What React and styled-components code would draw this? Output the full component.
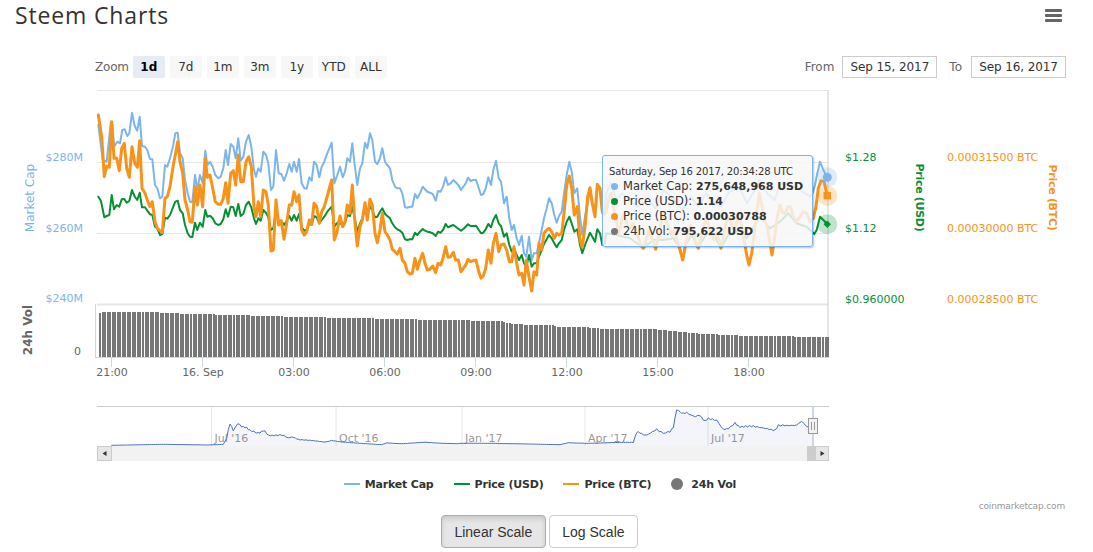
import styled, { createGlobalStyle } from "styled-components";

const BLUE = "#7cb5ec";
const GREEN = "#059033";
const ORANGE = "#f7931a";

// traced from the picture, x/y in 3x crop pixels, origin given to crop()
const crop = (ox, oy, pts) => pts.map(([x, y]) => [ox + x / 3, oy + y / 3]);
const line = (pts) => pts.map(([x, y]) => `${x.toFixed(1)},${y.toFixed(1)}`).join(" ");

const blueA = [[25,105],[38,210],[50,215],[62,100],[66,95],[72,170],[82,155],[90,160],[97,120],[104,118],[112,138],[118,130],[126,68],[134,108],[142,122],[149,80],[156,168],[165,170],[172,180],[180,207],[187,208],[195,285],[202,295],[210,325],[217,320],[225,225],[232,230],[240,205],[250,165],[256,130],[263,128],[270,190],[278,205],[285,270],[293,310],[300,335],[307,337],[315,255],[322,300],[330,255],[338,280],[346,182],[352,225],[360,215],[368,230],[376,255],[385,265],[392,260],[400,235],[407,180],[414,225],[422,162],[430,170],[437,205],[445,145],[452,212],[460,200],[468,155],[476,135],[484,170],[492,240],[498,260],[505,235],[512,245],[520,185],[528,195],[535,220],[543,300],[550,290],[558,180],[566,250],[574,252],[582,272],[590,250],[598,222],[605,245],[612,215],[620,245],[627,207],[635,280],[643,295],[650,296],[658,262],[665,272],[672,215],[680,225],[688,262],[695,230],[703,215],[712,190],[725,158],[733,280],[740,260]];
const blueB = [[0,230],[8,262],[15,245],[22,205],[30,215],[37,160],[44,225],[52,285],[60,235],[67,220],[75,158],[82,175],[90,130],[97,150],[105,215],[112,222],[120,205],[127,175],[135,215],[142,225],[150,235],[157,270],[165,290],[172,295],[180,295],[187,310],[195,352],[202,353],[210,350],[217,350],[225,312],[232,325],[240,310],[248,290],[255,298],[262,305],[270,308],[278,312],[287,332],[294,303],[302,305],[309,290],[317,262],[324,285],[332,280],[340,270],[347,277],[355,285],[363,300],[370,290],[377,280],[384,263],[392,273],[400,270],[408,270],[415,290],[423,315],[430,312],[437,295],[445,262],[453,285],[460,240],[468,212],[476,265],[483,275],[492,340],[500,320],[508,385],[515,420],[522,405],[530,445],[537,465],[545,437],[552,490],[559,500],[567,440],[575,510],[582,490],[590,490],[597,460],[605,420],[612,385],[620,355],[627,325],[635,340],[643,375],[650,398],[657,378],[665,365],[672,310],[680,255],[688,215],[695,245],[703,310],[712,295],[720,380],[727,435],[735,380],[743,340],[750,300],[757,345],[765,370],[772,290],[780,300],[787,370],[795,375]];
const orangeA = [[25,75],[35,140],[43,260],[50,228],[58,232],[65,95],[72,205],[80,205],[88,242],[95,175],[103,160],[110,235],[118,262],[126,170],[134,220],[142,232],[149,152],[156,295],[165,310],[172,330],[180,350],[187,335],[195,395],[202,415],[210,422],[217,428],[225,325],[232,320],[240,290],[250,225],[256,195],[263,155],[270,215],[278,250],[285,330],[293,360],[300,395],[307,397],[315,290],[322,345],[330,285],[338,350],[346,205],[352,262],[360,255],[368,295],[376,335],[385,343],[392,343],[400,325],[407,278],[414,340],[422,250],[430,242],[437,285],[445,195],[452,275],[460,275],[468,215],[476,200],[484,230],[492,350],[498,380],[505,335],[512,380],[520,300],[528,305],[535,345],[543,483],[550,480],[558,330],[566,405],[574,392],[582,448],[590,400],[598,345],[605,345],[612,305],[620,335],[627,315],[635,420],[643,435],[650,425],[658,390],[665,403],[672,340],[680,350],[688,400],[695,365],[703,350],[712,318],[725,270],[733,450],[740,430]];
const orangeB = [[0,378],[8,410],[15,395],[22,345],[30,370],[37,285],[44,390],[52,468],[60,410],[67,390],[75,338],[82,390],[90,328],[97,345],[105,430],[112,458],[120,420],[127,370],[135,425],[142,435],[150,450],[157,478],[165,485],[172,492],[180,475],[187,510],[195,520],[202,545],[210,552],[217,550],[225,505],[232,538],[240,510],[248,490],[255,520],[262,540],[270,538],[278,528],[287,548],[294,520],[302,525],[309,505],[317,470],[324,502],[332,500],[340,487],[347,510],[355,510],[363,545],[370,535],[377,525],[384,508],[392,515],[400,512],[408,510],[415,540],[423,565],[430,558],[437,535],[445,480],[453,520],[460,460],[468,430],[476,485],[483,465],[492,462],[500,480],[508,515],[515,515],[522,470],[530,520],[537,555],[545,550],[552,585],[559,510],[567,560],[575,603],[582,545],[590,555],[597,460],[605,480],[612,430],[620,420],[627,415],[635,425],[643,445],[650,430],[657,435],[665,430],[672,370],[680,285],[688,258],[695,295],[703,375],[712,350],[720,450],[727,472],[735,410],[743,320],[750,293],[757,340],[765,380],[772,283],[780,295],[787,365],[795,370]];
const greenA = [[25,320],[33,333],[43,382],[50,378],[58,375],[65,315],[72,358],[80,345],[88,350],[95,328],[103,327],[110,338],[118,333],[126,300],[134,320],[142,330],[149,308],[156,352],[165,352],[172,362],[180,373],[187,375],[195,410],[202,415],[210,435],[217,432],[225,383],[232,386],[240,375],[250,350],[256,335],[263,332],[270,360],[278,370],[285,405],[293,430],[300,440],[307,441],[315,398],[322,420],[330,398],[338,410],[346,360],[352,380],[360,377],[368,385],[376,400],[385,405],[392,402],[400,388],[407,358],[414,380],[422,350],[430,352],[437,378],[445,342],[452,378],[460,372],[468,345],[476,335],[484,352],[492,385],[498,402],[505,385],[512,392],[520,360],[528,368],[535,382],[543,420],[550,415],[558,360],[566,395],[574,392],[582,405],[590,392],[598,378],[605,392],[612,375],[620,392],[627,372],[635,412],[643,422],[650,420],[658,400],[665,405],[672,378],[680,382],[688,400],[695,390],[703,380],[712,365],[725,350],[733,410],[740,400]];
const greenB = [[0,395],[8,410],[15,400],[22,375],[30,378],[37,350],[44,385],[52,425],[60,400],[67,385],[75,358],[82,375],[90,350],[97,360],[105,382],[112,380],[120,365],[127,355],[135,372],[142,378],[150,385],[157,400],[165,412],[172,418],[180,422],[187,428],[195,448],[202,450],[210,448],[217,448],[225,428],[232,435],[240,425],[248,417],[255,422],[262,425],[270,427],[278,430],[287,438],[294,425],[302,428],[309,420],[317,402],[324,412],[332,408],[340,405],[347,410],[355,416],[363,422],[370,417],[377,410],[384,403],[392,408],[400,408],[408,407],[415,418],[423,430],[430,428],[437,418],[445,402],[453,412],[460,390],[468,375],[476,400],[483,408],[492,440],[500,430],[508,465],[515,485],[522,475],[530,495],[537,510],[545,495],[552,520],[559,530],[567,495],[575,530],[582,520],[590,520],[597,500],[605,480],[612,462],[620,448],[627,435],[635,445],[643,460],[650,472],[657,460],[665,450],[672,420],[680,395],[688,380],[695,400],[703,425],[712,418],[720,465],[727,490],[735,465],[743,445],[750,428],[757,440],[765,455],[772,418],[780,430],[787,465],[795,460]];

// the stretch behind the tooltip and up to the last point
const orangeC = [[18,190],[25,150],[33,130],[42,180],[50,220],[58,250],[66,205],[74,190],[82,230],[90,235],[98,220],[106,240],[114,260],[122,285],[130,295],[138,270],[146,240],[154,260],[162,280],[167,298],[175,260],[183,215],[191,190],[199,215],[207,235],[215,255],[223,240],[231,270],[240,300],[248,330],[256,290],[264,250],[272,225],[280,245],[288,280],[295,295],[303,260],[311,230],[319,205],[327,230],[335,255],[343,270],[351,250],[359,280],[363,295],[371,255],[379,215],[387,200],[395,225],[403,240],[411,215],[419,190],[427,245],[435,285],[441,320],[447,345],[455,310],[463,250],[470,190],[478,130],[486,170],[494,210],[502,230],[510,280],[516,315],[524,260],[532,200],[540,165],[548,190],[556,190],[564,170],[572,170],[580,200],[590,215],[600,200],[610,185],[620,190],[630,215],[640,205],[648,170],[655,115],[663,92],[672,95],[682,137]];
const blueC = [[18,130],[33,100],[50,150],[66,130],[90,150],[114,170],[146,150],[167,175],[191,120],[223,150],[248,180],[272,140],[295,170],[319,130],[343,160],[363,170],[387,125],[419,115],[441,160],[470,110],[478,90],[502,130],[524,150],[540,100],[572,105],[600,120],[630,140],[638,130],[645,105],[652,70],[660,35],[668,55],[675,70],[682,82]];
const greenC = [[18,250],[50,255],[90,265],[130,293],[160,270],[190,270],[220,265],[240,295],[248,330],[256,285],[275,255],[295,293],[320,250],[345,262],[363,293],[385,255],[420,240],[440,265],[470,215],[480,200],[510,235],[540,215],[565,190],[590,220],[620,230],[643,252],[650,240],[660,200],[670,210],[682,223]];

const navA = [[50,136],[200,133],[340,135],[385,133],[395,115],[405,70],[415,90],[420,85],[428,68],[440,78],[455,85],[470,92],[490,98],[505,92],[520,105],[560,105],[580,112],[595,112],[610,118],[650,122],[690,126],[710,122],[740,126],[800,130],[860,134],[875,129],[920,131],[990,127],[1040,130],[1090,131]];
const navB = [[0,130],[100,130],[200,132],[300,134],[325,128],[380,130],[450,128],[520,127],[530,95],[545,102],[560,105],[590,88],[610,98],[630,95],[640,80],[650,30],[665,38],[680,40],[700,48],[720,45],[735,65],[745,55],[770,62],[790,90],[805,85],[825,70],[840,80],[880,80],[910,85],[945,90],[955,75],[975,75],[1010,75],[1025,65],[1045,85],[1055,80]];

const bluePts = [...crop(90, 90, blueA), ...crop(340, 90, blueB), ...crop(600, 150, blueC)];
const greenPts = [...crop(90, 90, greenA), ...crop(340, 90, greenB), ...crop(600, 150, greenC)];
const orangePts = [...crop(90, 90, orangeA), ...crop(340, 90, orangeB), ...crop(600, 150, orangeC)];

// the navigator line is finer than the trace: add a small wiggle where it rises off the floor
const roughen = (pts) =>
  pts.flatMap(([x, y], i) => {
    if (i === 0) return [[x, y]];
    const [px, py] = pts[i - 1];
    const steps = Math.max(1, Math.round((x - px) / 2));
    return Array.from({ length: steps }, (_, s) => {
      const t = (s + 1) / steps;
      const nx = px + (x - px) * t;
      const ny = py + (y - py) * t;
      const amp = Math.min(1, (445 - ny) / 12);
      return [nx, ny + amp * (0.7 * Math.sin(nx * 1.7) + 0.5 * Math.sin(nx * 3.1))];
    });
  });
const navPts = roughen([...crop(95, 400, navA), ...crop(460, 400, navB)]);

const volumeTops = [[99,312.5],[150,312],[180,313.5],[250,315.5],[300,317],[350,318],[440,320],[467,320],[475,321],[500,321],[505,322.7],[517,324.3],[540,325],[553,325],[555,326.7],[597,327.7],[600,329],[653,329],[667,330.7],[680,331.7],[693,333.3],[713,334.3],[733,335.3],[753,336],[787,336],[800,337],[829,337]];

const volumeTop = (x) => {
  const i = volumeTops.findIndex(([px]) => px >= x);
  if (i <= 0) return volumeTops[0][1];
  const [x0, y0] = volumeTops[i - 1];
  const [x1, y1] = volumeTops[i];
  return Math.round(y0 + ((y1 - y0) * (x - x0)) / (x1 - x0));
};

const bars = Array.from({ length: 289 }, (_, i) => Math.round(99 + i * 2.528));
const hours = [
  [111, "21:00"], [202, "16. Sep"], [293, "03:00"], [384, "06:00"],
  [475, "09:00"], [566, "12:00"], [657, "15:00"], [748, "18:00"],
];
const months = [
  [211.5, "Jul '16"], [336, "Oct '16"], [462, "Jan '17"], [585, "Apr '17"], [708, "Jul '17"],
];
const ranges = ["1d", "7d", "1m", "3m", "1y", "YTD", "ALL"];
const rightAxis = [
  [161, "$1.28", "0.00031500 BTC"],
  [232, "$1.12", "0.00030000 BTC"],
  [303, "$0.960000", "0.00028500 BTC"],
];
const tooltipRows = [
  [BLUE, "Market Cap:", "275,648,968 USD"],
  [GREEN, "Price (USD):", "1.14"],
  [ORANGE, "Price (BTC):", "0.00030788"],
  ["#777", "24h Vol:", "795,622 USD"],
];
const legend = [
  [BLUE, "Market Cap"],
  [GREEN, "Price (USD)"],
  [ORANGE, "Price (BTC)"],
];

const GlobalStyle = createGlobalStyle`
  body {
    margin: 0;
    background: #fff;
    font-family: "DejaVu Sans", sans-serif;
  }
`;

const Page = styled.div`
  width: 1093px;
  height: 552px;
  overflow: hidden;
`;

const Header = styled.div`
  display: flex;
  justify-content: space-between;
  height: 56px;
  padding: 0 31px 0 15px;
  box-sizing: border-box;
`;

const Title = styled.h2`
  margin: 0;
  font-family: "Open Sans", sans-serif;
  font-size: 23px;
  font-weight: 400;
  letter-spacing: 0.85px;
  line-height: 31px;
  color: #333;
`;

const Menu = styled.div`
  display: flex;
  flex-direction: column;
  gap: 2px;
  padding-top: 9px;
`;

const MenuBar = styled.span`
  width: 17px;
  height: 3px;
  border-radius: 1px;
  background: #666;
`;

const Toolbar = styled.div`
  display: flex;
  align-items: center;
  height: 22px;
  padding: 0 27px 0 95px;
  font-size: 12px;
  color: #666;
`;

const ZoomLabel = styled.span`
  margin-right: 4px;
  letter-spacing: -0.2px;
`;

const Ranges = styled.div`
  display: flex;
  gap: 5px;
  margin-right: auto;
`;

const RangeButton = styled.button`
  width: 32px;
  height: 22px;
  padding: 0;
  border: 0;
  border-radius: 2px;
  font: ${(p) => (p.$active ? 700 : 400)} 12px "DejaVu Sans", sans-serif;
  color: ${(p) => (p.$active ? "#000" : "#333")};
  background: ${(p) => (p.$active ? "#e6ebf5" : "#f7f7f7")};
`;

const DateBox = styled.span`
  display: flex;
  align-items: center;
  justify-content: center;
  width: 95px;
  height: 22px;
  margin-left: 7px;
  box-sizing: border-box;
  border: 1px solid #ccc;
  letter-spacing: -0.1px;
  color: #333;
`;

const FromLabel = styled.span`
  margin-right: 1px;
`;

const ToLabel = styled.span`
  margin-left: 12px;
  margin-right: 2px;
`;

const ChartWrap = styled.div`
  position: relative;
  height: 392px;
`;

const ChartSvg = styled.svg`
  display: block;
  font-family: "DejaVu Sans", sans-serif;
`;

const Series = styled.polyline`
  fill: none;
  stroke: ${(p) => p.$color};
  stroke-width: ${(p) => p.$width};
  stroke-linejoin: round;
  stroke-linecap: round;
`;

const AxisText = styled.text`
  font-size: 11px;
  fill: ${(p) => p.$color};
`;

const AxisTitle = styled.text`
  font-size: ${(p) => (p.$narrow ? 11 : 12)}px;
  font-weight: ${(p) => (p.$bold ? 700 : 400)};
  letter-spacing: ${(p) => (p.$narrow ? -0.3 : 0)}px;
  fill: ${(p) => p.$color};
  text-anchor: middle;
`;

const Tooltip = styled.div`
  position: absolute;
  left: 602px;
  top: 77px;
  width: 211px;
  height: 92px;
  box-sizing: border-box;
  padding: 9px 6px 0;
  border: 1px solid ${BLUE};
  border-radius: 3px;
  background: rgba(247, 247, 247, 0.85);
  box-shadow: 1px 1px 2px rgba(0, 0, 0, 0.25);
  font-size: 11.5px;
  line-height: 15px;
  color: #333;
  white-space: nowrap;
`;

const TooltipDate = styled.div`
  font-size: 10px;
  line-height: 13px;
  letter-spacing: -0.15px;
  margin-bottom: 1px;
`;

const TooltipRow = styled.div`
  display: flex;
  align-items: center;
  gap: 5px;
`;

const Dot = styled.span`
  flex: none;
  width: 7px;
  height: 7px;
  margin-left: 2px;
  border-radius: 50%;
  background: ${(p) => p.$color};
`;

const TooltipValue = styled.b`
  font-size: 11px;
`;

const Legend = styled.div`
  display: flex;
  align-items: center;
  justify-content: center;
  gap: 20px;
  height: 26px;
  padding: 2px 13px 0 0;
  box-sizing: border-box;
  font-size: 11px;
  font-weight: 700;
  letter-spacing: -0.2px;
  color: #333;
`;

const LegendItem = styled.span`
  display: flex;
  align-items: center;
  gap: 5px;
`;

const LegendLine = styled.span`
  width: 16px;
  height: 2px;
  background: ${(p) => p.$color};
`;

const LegendDot = styled.span`
  width: 12px;
  height: 12px;
  margin-right: 3px;
  border-radius: 50%;
  background: #777;
`;

const Credit = styled.div`
  height: 19px;
  padding: 3px 28px 0 0;
  box-sizing: border-box;
  text-align: right;
  font-size: 9px;
  letter-spacing: -0.15px;
  line-height: 14px;
  color: #999;
`;

const ScaleRow = styled.div`
  display: flex;
  justify-content: center;
  gap: 3px;
  padding-right: 14px;
`;

const ScaleButton = styled.button`
  height: 33px;
  padding: 0 12.5px;
  border: 1px solid ${(p) => (p.$active ? "#adadad" : "#ccc")};
  border-radius: 4px;
  font: 14px "Liberation Sans", Arial, sans-serif;
  color: #333;
  background: ${(p) => (p.$active ? "#e6e6e6" : "#fff")};
  box-shadow: ${(p) => (p.$active ? "inset 0 3px 5px rgba(0, 0, 0, 0.125)" : "none")};
`;

const Chart = () => (
  <ChartSvg width="1093" height="392" viewBox="0 78 1093 392">
    {/* plot grid */}
    <path d="M97 90.5H828M97 162.5H828M97 233.5H828" stroke="#e6e6e6" fill="none" />
    <path d="M97 304.5H828" stroke="#e6e6e6" strokeWidth="2" fill="none" />
    <path d="M828 90V358" stroke="#ccc" fill="none" />

    {/* left axis */}
    <AxisText $color={BLUE} x="83" y="161" textAnchor="end">$280M</AxisText>
    <AxisText $color={BLUE} x="83" y="232" textAnchor="end">$260M</AxisText>
    <AxisText $color={BLUE} x="83" y="302" textAnchor="end">$240M</AxisText>
    <AxisText $color="#666" x="81" y="355" textAnchor="end">0</AxisText>
    <AxisTitle $color={BLUE} transform="translate(34 198) rotate(-90)">Market Cap</AxisTitle>
    <AxisTitle $color="#666" $bold transform="translate(32 330) rotate(-90)">24h Vol</AxisTitle>

    {/* right axes */}
    {rightAxis.map(([y, usd, btc]) => (
      <g key={y}>
        <AxisText $color={GREEN} x="845" y={y}>{usd}</AxisText>
        <AxisText $color={ORANGE} x="947" y={y}>{btc}</AxisText>
      </g>
    ))}
    <AxisTitle $color={GREEN} $bold $narrow transform="translate(916 197.5) rotate(90)">Price (USD)</AxisTitle>
    <AxisTitle $color={ORANGE} $bold $narrow transform="translate(1049 197.5) rotate(90)">Price (BTC)</AxisTitle>

    {/* volume */}
    <g shapeRendering="crispEdges">
      {bars.map((x) => (
        <rect key={x} x={x} y={volumeTop(x)} width="2" height={357 - volumeTop(x)} fill="#777" />
      ))}
    </g>
    <path d="M95.5 304V358M96 357.5H829" stroke="#ccd6eb" fill="none" />
    {hours.map(([x, label]) => (
      <g key={x}>
        <path d={`M${x + 0.5} 358V367`} stroke="#ccd6eb" />
        <AxisText $color="#666" x={x + 1} y="376" textAnchor="middle">{label}</AxisText>
      </g>
    ))}

    {/* price lines */}
    <Series $color={BLUE} $width="2" points={line(bluePts)} />
    <Series $color={GREEN} $width="2" points={line(greenPts)} />
    <Series $color={ORANGE} $width="3" points={line(orangePts)} />

    {/* hover markers */}
    <circle cx="827.3" cy="177.3" r="10" fill={BLUE} opacity="0.25" />
    <circle cx="827.3" cy="177.3" r="4.5" fill={BLUE} />
    <circle cx="827.3" cy="195.7" r="10" fill={ORANGE} opacity="0.25" />
    <rect x="823.5" y="192" width="7.5" height="7.5" fill={ORANGE} />
    <circle cx="827.3" cy="224.3" r="10" fill={GREEN} opacity="0.25" />
    <path d="M827.3 220.5L831 224.3L827.3 228L823.6 224.3Z" fill={GREEN} />

    {/* navigator */}
    <path d="M97 406.5H829" stroke="#ccc" fill="none" />
    {months.map(([x, label]) => (
      <g key={x}>
        <path d={`M${x} 407V446`} stroke="#e6e6e6" />
        <AxisText $color="#999" x={x + 3} y="442">{label}</AxisText>
      </g>
    ))}
    <polygon points={`${line(navPts)} 813,446 112,446`} fill="#335cad" fillOpacity="0.06" />
    <Series $color="#4a6fb8" $width="1" points={line(navPts)} />
    <rect x="97" y="446" width="732" height="15" fill="#f2f2f2" />
    <rect x="807" y="446" width="8" height="15" fill="#ccc" />
    <rect x="97.5" y="446.5" width="14" height="14" fill="#e6e6e6" stroke="#ccc" />
    <path d="M106.5 451V456L102.5 453.5Z" fill="#333" />
    <rect x="815.5" y="446.5" width="13" height="14" fill="#e6e6e6" stroke="#ccc" />
    <path d="M820.5 451V456L824.5 453.5Z" fill="#333" />
    <path d="M813 406V446" stroke="#ccd6eb" strokeWidth="2" />
    <rect x="808.5" y="418.5" width="9" height="15" fill="#f2f2f2" stroke="#999" />
    <path d="M811.5 422V430M814.5 422V430" stroke="#999" fill="none" />
  </ChartSvg>
);

export default function App() {
  return (
    <Page>
      <GlobalStyle />
      <Header>
        <Title>Steem Charts</Title>
        <Menu>
          <MenuBar />
          <MenuBar />
          <MenuBar />
        </Menu>
      </Header>
      <Toolbar>
        <ZoomLabel>Zoom</ZoomLabel>
        <Ranges>
          {ranges.map((r) => (
            <RangeButton key={r} $active={r === "1d"}>{r}</RangeButton>
          ))}
        </Ranges>
        <FromLabel>From</FromLabel>
        <DateBox>Sep 15, 2017</DateBox>
        <ToLabel>To</ToLabel>
        <DateBox>Sep 16, 2017</DateBox>
      </Toolbar>
      <ChartWrap>
        <Chart />
        <Tooltip>
          <TooltipDate>Saturday, Sep 16 2017, 20:34:28 UTC</TooltipDate>
          {tooltipRows.map(([color, label, value]) => (
            <TooltipRow key={label}>
              <Dot $color={color} />
              <span>{label} <TooltipValue>{value}</TooltipValue></span>
            </TooltipRow>
          ))}
        </Tooltip>
      </ChartWrap>
      <Legend>
        {legend.map(([color, label]) => (
          <LegendItem key={label}>
            <LegendLine $color={color} />
            {label}
          </LegendItem>
        ))}
        <LegendItem>
          <LegendDot />
          24h Vol
        </LegendItem>
      </Legend>
      <Credit>coinmarketcap.com</Credit>
      <ScaleRow>
        <ScaleButton $active>Linear Scale</ScaleButton>
        <ScaleButton>Log Scale</ScaleButton>
      </ScaleRow>
    </Page>
  );
}
